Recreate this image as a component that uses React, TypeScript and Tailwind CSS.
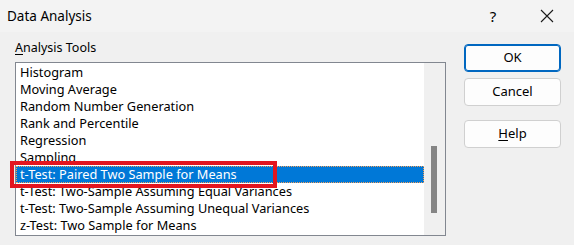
import React from 'react';

const tools = [
  'Histogram',
  'Moving Average',
  'Random Number Generation',
  'Rank and Percentile',
  'Regression',
  'Sampling',
  't-Test: Paired Two Sample for Means',
  't-Test: Two-Sample Assuming Equal Variances',
  't-Test: Two-Sample Assuming Unequal Variances',
  'z-Test: Two Sample for Means',
];

const selectedIndex = 6;

const App: React.FC = () => {
  return (
    <div
      className="w-[574px] h-[245px] bg-[#f0f0f0] text-black overflow-hidden relative"
      style={{ fontFamily: '"Noto Sans", "Open Sans", sans-serif' }}
    >
      {/* title bar */}
      <div className="h-[32px] bg-[#f3f3f3] flex items-center pl-[7px]">
        <span className="text-[13.5px] flex-1">Data Analysis</span>
        <span className="w-[20px] text-center text-[15px] mr-[37px]">?</span>
        <svg width="14" height="14" viewBox="0 0 14 14" className="mr-[20px]">
          <path d="M1 1 L13 13 M13 1 L1 13" stroke="#1a1a1a" strokeWidth="1.1" fill="none" />
        </svg>
      </div>

      <div className="flex pl-[15px] pt-[7px]">
        <div className="flex flex-col">
          <div className="text-[12.5px] h-[23px] leading-[17px]">
            <span className="underline underline-offset-2">A</span>nalysis Tools
          </div>
          <div className="w-[431px] h-[174px] border border-[#828790] bg-white flex">
            <div className="flex-1 pt-[1px]">
              {tools.map((t, i) => (
                <div
                  key={t}
                  className={
                    i === selectedIndex
                      ? 'h-[17px] leading-[17px] px-[4px] text-[12.75px] whitespace-nowrap bg-[#0078d7] text-white outline-1 outline-dotted outline-[#f5a05a] -outline-offset-1'
                      : 'h-[17px] leading-[17px] px-[4px] text-[12.75px] whitespace-nowrap'
                  }
                >
                  {t}
                </div>
              ))}
            </div>
            <div className="w-[21px] bg-[#f0f0f0] flex flex-col pl-[7px] pt-[83px]">
              <div className="w-[6px] h-[67px] bg-[#858585]" />
            </div>
          </div>
        </div>

        <div className="ml-[18px] mt-[5px] flex flex-col w-[97px]">
          <button className="h-[28px] rounded-[4px] border border-[#0067c0] bg-[#fdfdfd] text-[13px] shadow-[inset_0_0_0_1px_#0067c0]">
            OK
          </button>
          <button className="h-[28px] mt-[6px] rounded-[4px] border border-[#d0d0d0] bg-[#fdfdfd] text-[13px]">
            Cancel
          </button>
          <button className="h-[28px] mt-[14px] rounded-[4px] border border-[#d0d0d0] bg-[#fdfdfd] text-[13px]">
            <span className="underline underline-offset-2">H</span>elp
          </button>
        </div>
      </div>

      {/* annotation box around the selected row */}
      <div className="absolute left-[10px] top-[161px] w-[267px] h-[27px] border-[4px] border-[#e3151f]" />
    </div>
  );
};

export default App;
